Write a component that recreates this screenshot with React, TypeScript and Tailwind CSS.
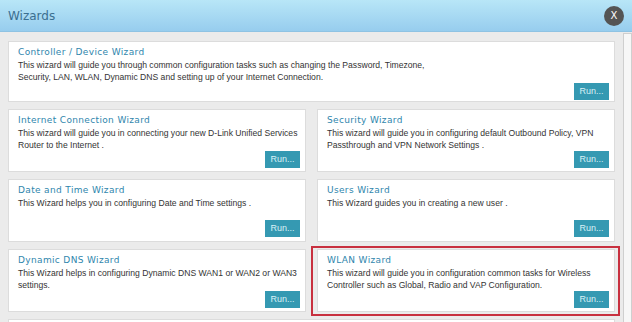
import React from 'react';

// Wizard card data
interface Wizard {
  title: string;
  lines: string[];
}

const first: Wizard = {
  title: 'Controller / Device Wizard',
  lines: [
    'This wizard will guide you through common configuration tasks such as changing the Password, Timezone,',
    'Security, LAN, WLAN, Dynamic DNS and setting up of your Internet Connection.',
  ],
};

const rows: [Wizard, Wizard][] = [
  [
    {
      title: 'Internet Connection Wizard',
      lines: ['This wizard will guide you in connecting your new D-Link Unified Services', 'Router to the Internet .'],
    },
    {
      title: 'Security Wizard',
      lines: ['This wizard will guide you in configuring default Outbound Policy, VPN', 'Passthrough and VPN Network Settings .'],
    },
  ],
  [
    {
      title: 'Date and Time Wizard',
      lines: ['This Wizard helps you in configuring Date and Time settings .'],
    },
    {
      title: 'Users Wizard',
      lines: ['This Wizard guides you in creating a new user .'],
    },
  ],
  [
    {
      title: 'Dynamic DNS Wizard',
      lines: ['This Wizard helps in configuring Dynamic DNS WAN1 or WAN2 or WAN3', 'settings.'],
    },
    {
      title: 'WLAN Wizard',
      lines: ['This wizard will guide you in configuration common tasks for Wireless', 'Controller such as Global, Radio and VAP Configuration.'],
    },
  ],
];

const WizardCard: React.FC<{ wizard: Wizard; className: string; highlight?: boolean }> = ({ wizard, className, highlight }) => {
  return (
    <div className={`relative min-w-0 ${className}`}>
      <div className="flex h-full flex-col overflow-hidden border border-[#dcdcdc] bg-white pl-[9px] pr-[5px] pt-[3px] pb-[4px]">
        <div className="whitespace-nowrap font-['DejaVu_Sans',sans-serif] text-[9px] leading-[14px] tracking-[0.35px] text-[#2f86ad]">
          {wizard.title}
        </div>
        <div className="whitespace-nowrap font-['Liberation_Sans',Arial,sans-serif] text-[8.6px] leading-[12px] text-[#333]">
          {wizard.lines.map((line, i) => (
            <div key={i}>{line}</div>
          ))}
        </div>
        <div className="mt-auto flex justify-end">
          <button className="h-[17px] w-[35px] bg-[#3599b2] font-['Liberation_Sans',Arial,sans-serif] text-[9px] text-[#d9f1f6]">
            Run...
          </button>
        </div>
      </div>
      {highlight && (
        <div className="pointer-events-none absolute -left-[6px] -right-[5px] -top-[3px] -bottom-[4px] border-2 border-[#c8303f]" />
      )}
    </div>
  );
};

export default function App() {
  return (
    <div className="h-[322px] w-[632px] overflow-hidden bg-[#ebebeb]">
      {/* Header */}
      <div className="flex h-[32px] items-center justify-between border-b border-[#8fc3e3] bg-gradient-to-b from-[#b8e6f7] to-[#97cdee] pl-[8px] pr-[8px]">
        <span className="font-['DejaVu_Sans',sans-serif] text-[12px] text-[#3b6f90]">Wizards</span>
        <div className="flex h-[20px] w-[20px] items-center justify-center rounded-full bg-[#545454] font-['DejaVu_Sans',sans-serif] text-[10px] text-white">
          X
        </div>
      </div>

      <div className="flex">
        {/* Content */}
        <div className="flex min-w-0 flex-1 flex-col gap-[7px] pl-[8px] pr-[8px] pt-[9px]">
          <WizardCard wizard={first} className="h-[61px]" />
          {rows.map(([a, b], i) => (
            <div key={i} className="flex gap-[11px]">
              <WizardCard wizard={a} className="h-[63px] flex-1" />
              <WizardCard wizard={b} className="h-[63px] flex-1" highlight={i === 2} />
            </div>
          ))}
          <div className="h-[63px] shrink-0 border border-[#dcdcdc] bg-white" />
        </div>
        {/* Scrollbar */}
        <div className="mt-[1px] h-[290px] w-[9px] border border-[#cfcfcf] bg-[#f7f7f7]" />
      </div>
    </div>
  );
}
